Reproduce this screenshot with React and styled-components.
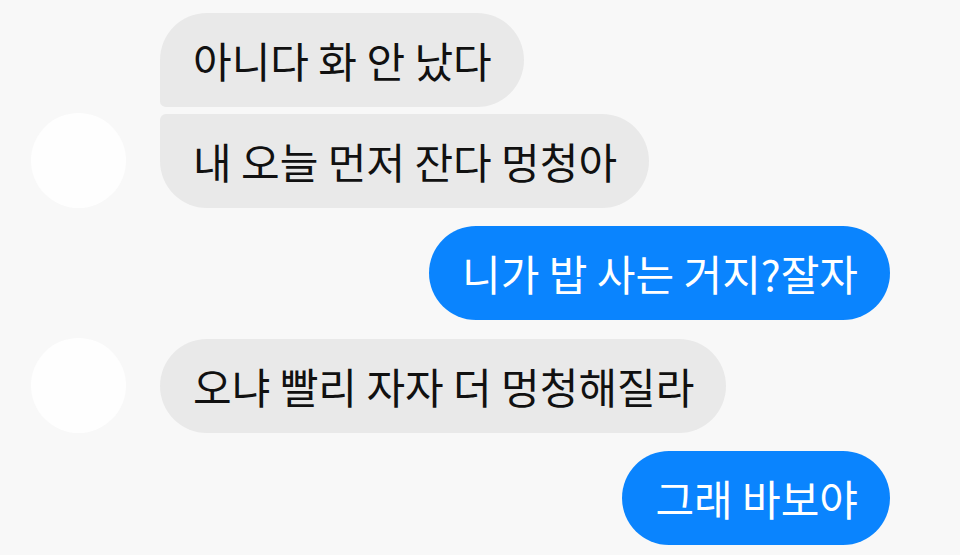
import React from "react";
import styled, { createGlobalStyle } from "styled-components";

const GlobalStyle = createGlobalStyle`
  html, body {
    margin: 0;
    padding: 0;
    background: #f8f8f8;
  }
  body {
    font-family: "Noto Sans CJK KR", "Noto Sans", sans-serif;
  }
`;

const Thread = styled.div`
  width: 960px;
  height: 555px;
  overflow: hidden;
  box-sizing: border-box;
  padding: 13px 70px 0 31px;
  display: flex;
  flex-direction: column;
  gap: 18px;
`;

const Group = styled.div`
  display: flex;
  align-items: flex-end;
  justify-content: ${(p) => (p.$mine ? "flex-end" : "flex-start")};
`;

const Avatar = styled.div`
  width: 95px;
  height: 95px;
  border-radius: 50%;
  background: #fefefe;
  flex: none;
  margin-right: 34px;
`;

const Stack = styled.div`
  display: flex;
  flex-direction: column;
  align-items: flex-start;
  gap: 7px;
`;

const Bubble = styled.div`
  box-sizing: border-box;
  height: 94px;
  display: flex;
  align-items: center;
  padding: 0 32px 2px 33px;
  font-size: 42px;
  white-space: nowrap;
  background: ${(p) => (p.$mine ? "#0a84fe" : "#e9e9e9")};
  color: ${(p) => (p.$mine ? "#ffffff" : "#111111")};
  border-radius: 48px;
  border-top-left-radius: ${(p) => (p.$first || p.$mine ? "48px" : "6px")};
  border-bottom-left-radius: ${(p) => (p.$last || p.$mine ? "48px" : "6px")};
`;

export default function App() {
  return (
    <>
      <GlobalStyle />
      <Thread>
        <Group>
          <Avatar />
          <Stack>
            <Bubble $first>아니다 화 안 났다</Bubble>
            <Bubble $last>내 오늘 먼저 잔다 멍청아</Bubble>
          </Stack>
        </Group>
        <Group $mine>
          <Bubble $mine>니가 밥 사는 거지?잘자</Bubble>
        </Group>
        <Group>
          <Avatar />
          <Stack>
            <Bubble $first $last>오냐 빨리 자자 더 멍청해질라</Bubble>
          </Stack>
        </Group>
        <Group $mine>
          <Bubble $mine>그래 바보야</Bubble>
        </Group>
      </Thread>
    </>
  );
}
